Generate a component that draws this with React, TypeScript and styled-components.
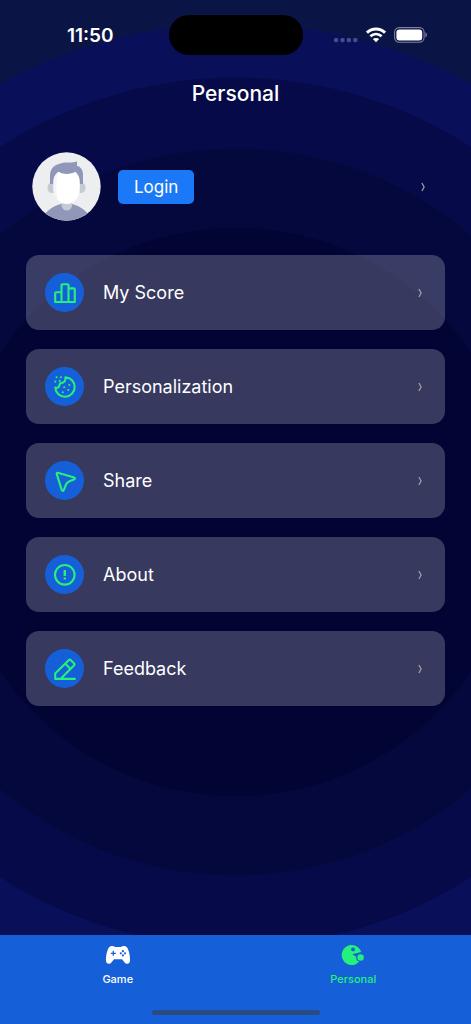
import React from 'react';
import styled, { createGlobalStyle } from 'styled-components';

const GREEN = '#26f07c';
const BLUE = '#1560d8';

const GlobalStyle = createGlobalStyle`
  *, *::before, *::after { box-sizing: border-box; }
  body {
    margin: 0;
    font-family: Inter, 'Liberation Sans', sans-serif;
    color: #fff;
  }
  button { font: inherit; color: inherit; border: 0; cursor: pointer; }
  svg { display: block; flex: none; }
`;

const Screen = styled.div`
  display: flex;
  flex-direction: column;
  min-height: 100vh;
  background: radial-gradient(
    circle at center,
    #020534 284px, #04083c 285px,
    #04083c 363px, #060a49 364px,
    #060a49 434px, #090f59 435px,
    #090f59 488px, #0a1545 489px
  );
`;

const StatusBar = styled.div`
  display: grid;
  grid-template-columns: 1fr 134px 1fr;
  align-items: center;
  height: 70px;
`;

const Time = styled.time`
  padding-right: 55px;
  text-align: right;
  font-size: 19px;
  font-weight: 600;
`;

const Island = styled.div`
  height: 40px;
  border-radius: 20px;
  background: #000;
`;

const Indicators = styled.div`
  display: flex;
  align-items: center;
  gap: 8px;
  padding-left: 31px;
`;

const Title = styled.h1`
  margin: 0;
  line-height: 48px;
  text-align: center;
  font-size: 21px;
  font-weight: 500;
`;

const Main = styled.main`
  flex: 1;
  padding: 0 26px 24px;
`;

const Profile = styled.section`
  display: flex;
  align-items: center;
  gap: 17px;
  padding: 34px 18px 34px 6px;
`;

const LoginButton = styled.button`
  height: 34px;
  margin-right: auto;
  padding: 0 16px;
  border-radius: 5px;
  background: #1b78f6;
  font-size: 17px;
`;

const Menu = styled.ul`
  display: flex;
  flex-direction: column;
  gap: 19px;
  margin: 0;
  padding: 0;
  list-style: none;
`;

const MenuButton = styled.button`
  display: flex;
  align-items: center;
  gap: 19px;
  width: 100%;
  height: 75px;
  padding: 0 21px 0 19px;
  border-radius: 13px;
  background: rgba(255, 255, 255, 0.21);
  text-align: left;
  font-size: 18px;
`;

const MenuLabel = styled.span`
  flex: 1;
`;

const IconDisc = styled.span`
  display: grid;
  place-items: center;
  width: 39px;
  height: 39px;
  border-radius: 50%;
  background: ${BLUE};
`;

const PlainButton = styled.button`
  padding: 0;
  background: none;
`;

const TabBar = styled.footer`
  padding-bottom: 9px;
  background: ${BLUE};
`;

const Tabs = styled.nav`
  display: grid;
  grid-template-columns: 1fr 1fr;
  height: 75px;
`;

const Tab = styled.a<{ $active?: boolean }>`
  display: flex;
  flex-direction: column;
  align-items: center;
  gap: 4px;
  padding-top: 8px;
  color: ${(p) => (p.$active ? GREEN : '#fff')};
  font-size: 11px;
  font-weight: 500;
  line-height: 16px;
  text-decoration: none;
`;

const HomeIndicator = styled.div`
  width: 168px;
  height: 5px;
  margin: 0 auto;
  border-radius: 3px;
  background: #2b4a80;
`;

const Chevron = () => (
  <svg width="8" height="12" viewBox="0 0 8 12" fill="none" stroke="#9c9ea3" strokeWidth="1.3">
    <path d="M2.9 2 L5.1 6 L2.9 10" />
  </svg>
);

const LineIcon = ({ children }: { children: React.ReactNode }) => (
  <svg width="24" height="24" viewBox="0 0 24 24" fill="none" stroke={GREEN} strokeWidth="2.1" strokeLinecap="round" strokeLinejoin="round">
    {children}
  </svg>
);

const ScoreIcon = () => (
  <LineIcon>
    <path d="M8.5 21V11.2H3.1a.9.9 0 0 0-.9.9V21h19.6V8.3a.9.9 0 0 0-.9-.9h-5.4M8.5 11.2V4.1a.9.9 0 0 1 .9-.9h5.2a.9.9 0 0 1 .9.9V21" />
  </LineIcon>
);

const CookieIcon = () => (
  <LineIcon>
    <path d="M12.4 2.3A9.7 9.7 0 1 1 2.3 12.6C4 13.3 6.4 12.5 6.4 10.3 6.4 8.8 7.2 8.2 8.7 8 11.3 7.6 13 5.2 12.4 2.3Z" />
    <path d="M3.6 2.3h.01M8 2.3h.01M2.3 6.6h.01M6.7 5.9h.01M16.3 10h.01M11.2 12.2h.01M15.3 15h.01M9.8 17.2h.01" />
  </LineIcon>
);

const ShareIcon = () => (
  <LineIcon>
    <path d="M4.8 3.8 21.3 8.6Q22.7 9.3 21.4 10.2L16 12.5Q13.9 13.5 13 15.5L10.8 21.1Q9.7 22.7 8.8 21.1L3.7 4.9Q3.5 3.6 4.8 3.8Z" />
  </LineIcon>
);

const AboutIcon = () => (
  <LineIcon>
    <circle cx="11.8" cy="11.8" r="9.8" />
    <path d="M11.8 7v6M11.8 14.6v2" strokeLinecap="butt" strokeWidth="2.4" />
  </LineIcon>
);

const FeedbackIcon = () => (
  <LineIcon>
    <path d="M21.9 21.9H2.2V16.6L15.9 2.9Q16.7 2.1 17.5 2.9L21.2 6.6Q22 7.4 21.2 8.2L7.5 21.9M12.2 6.6l5.3 5.3" />
  </LineIcon>
);

const Dots = () => (
  <svg width="24" height="16" viewBox="0 0 24 16" fill="#484c86">
    {[0, 6.4, 12.8, 19.2].map((x) => (
      <rect key={x} x={x} y="11" width="4.2" height="4.2" rx="1.4" />
    ))}
  </svg>
);

const Wifi = () => (
  <svg width="20" height="16" viewBox="0 0 20 16" fill="none" stroke="#fff" strokeWidth="3">
    <path d="M1 5.7C6.2.8 13.8.8 19 5.7" />
    <path d="M4.4 9.3C7.7 6.3 12.3 6.3 15.6 9.3" strokeWidth="2.8" />
    <path d="M10 15.3 6.8 12.1C8.6 10.6 11.4 10.6 13.2 12.1Z" fill="#fff" stroke="none" />
  </svg>
);

const Battery = () => (
  <svg width="34" height="16" viewBox="0 0 34 16">
    <rect x="0.6" y="0.6" width="29.5" height="14.6" rx="4.6" fill="none" stroke="#7c80a2" strokeWidth="1.1" />
    <rect x="2.4" y="2.4" width="25.8" height="11" rx="3" fill="#fff" />
    <path d="M31.4 5.3c2 .8 2 4.4 0 5.2z" fill="#7c80a2" />
  </svg>
);

const Avatar = () => (
  <svg width="69" height="69" viewBox="0 0 69 69" role="img" aria-label="Avatar">
    <defs>
      <clipPath id="avatar-clip"><circle cx="34.5" cy="34.5" r="34.2" /></clipPath>
    </defs>
    <g clipPath="url(#avatar-clip)">
      <rect width="69" height="69" fill="#eceef0" />
      <path d="M8 69C14 58 23 51.5 34.5 51.5S55 58 61 69Z" fill="#9097b9" />
      <path d="M29.5 47h10.5v6.2a5.25 5.25 0 0 1-10.5 0z" fill="#c5cbd5" />
      <ellipse cx="20" cy="35.8" rx="4.6" ry="5.2" fill="#c5cbd5" />
      <ellipse cx="49" cy="35.8" rx="4.6" ry="5.2" fill="#c5cbd5" />
      <path d="M18 32V24C18 15.5 23 12.8 29 11.2 35 9.6 40 11.5 45 9.2V14C49 14.5 51 18.5 51 23V32Z" fill="#9097b9" />
      <path d="M21.5 30C21.5 25 23.5 22 26.7 19.8 31.5 22.8 38.5 22.6 43.4 19.8 46 22 47.8 25.5 47.8 30V37C47.8 45 42.5 52 34.8 52S21.5 45 21.5 37Z" fill="#fff" />
      <path d="M21.5 29V37C21.5 42 23.5 46 26.5 48.7 24.4 43 24 35 24.8 28 25 25 25.7 22.5 26.7 19.8 23.5 22 21.5 25 21.5 29Z" fill="#f3f5f6" />
    </g>
  </svg>
);

const GameIcon = () => (
  <svg width="26" height="24" viewBox="0 0 26 24">
    <path d="M5.5 3.3C7.5 2.8 9 3.1 10 4.1h6C17 3.1 18.5 2.8 20.5 3.3 23.4 4.3 25.2 12 25 17.6 24.8 21 21.8 21.9 19.6 19.4L17 16.3H9L6.4 19.4C4.2 21.9 1.2 21 1 17.6 .8 12 2.6 4.3 5.5 3.3Z" fill="#fff" />
    <path d="M8.3 7.8v5M5.8 10.3h5" stroke={BLUE} strokeWidth="1.3" />
    <g fill={BLUE}>
      <circle cx="17.9" cy="8.2" r="1.1" />
      <circle cx="17.9" cy="12.4" r="1.1" />
      <circle cx="15.8" cy="10.3" r="1.1" />
      <circle cx="20" cy="10.3" r="1.1" />
    </g>
  </svg>
);

const PersonalIcon = () => (
  <svg width="24" height="24" viewBox="0 0 24 24">
    <path d="M20.2 8.9A10 10 0 1 0 18.2 18.6 4.2 4.2 0 0 1 15.3 13.8L11.3 11.3Z" fill={GREEN} />
    <circle cx="12" cy="6.4" r="1.9" fill={BLUE} />
    <circle cx="19.6" cy="14.5" r="3.2" fill={GREEN} />
  </svg>
);

const items = [
  { label: 'My Score', Icon: ScoreIcon },
  { label: 'Personalization', Icon: CookieIcon },
  { label: 'Share', Icon: ShareIcon },
  { label: 'About', Icon: AboutIcon },
  { label: 'Feedback', Icon: FeedbackIcon },
];

export default function App() {
  return (
    <>
      <GlobalStyle />
      <Screen>
        <StatusBar>
          <Time>11:50</Time>
          <Island />
          <Indicators>
            <Dots />
            <Wifi />
            <Battery />
          </Indicators>
        </StatusBar>
        <Title>Personal</Title>
        <Main>
          <Profile>
            <Avatar />
            <LoginButton type="button">Login</LoginButton>
            <PlainButton type="button" aria-label="Open profile">
              <Chevron />
            </PlainButton>
          </Profile>
          <Menu>
            {items.map(({ label, Icon }) => (
              <li key={label}>
                <MenuButton type="button">
                  <IconDisc><Icon /></IconDisc>
                  <MenuLabel>{label}</MenuLabel>
                  <Chevron />
                </MenuButton>
              </li>
            ))}
          </Menu>
        </Main>
        <TabBar>
          <Tabs>
            <Tab href="#game"><GameIcon />Game</Tab>
            <Tab href="#personal" $active aria-current="page"><PersonalIcon />Personal</Tab>
          </Tabs>
          <HomeIndicator />
        </TabBar>
      </Screen>
    </>
  );
}
